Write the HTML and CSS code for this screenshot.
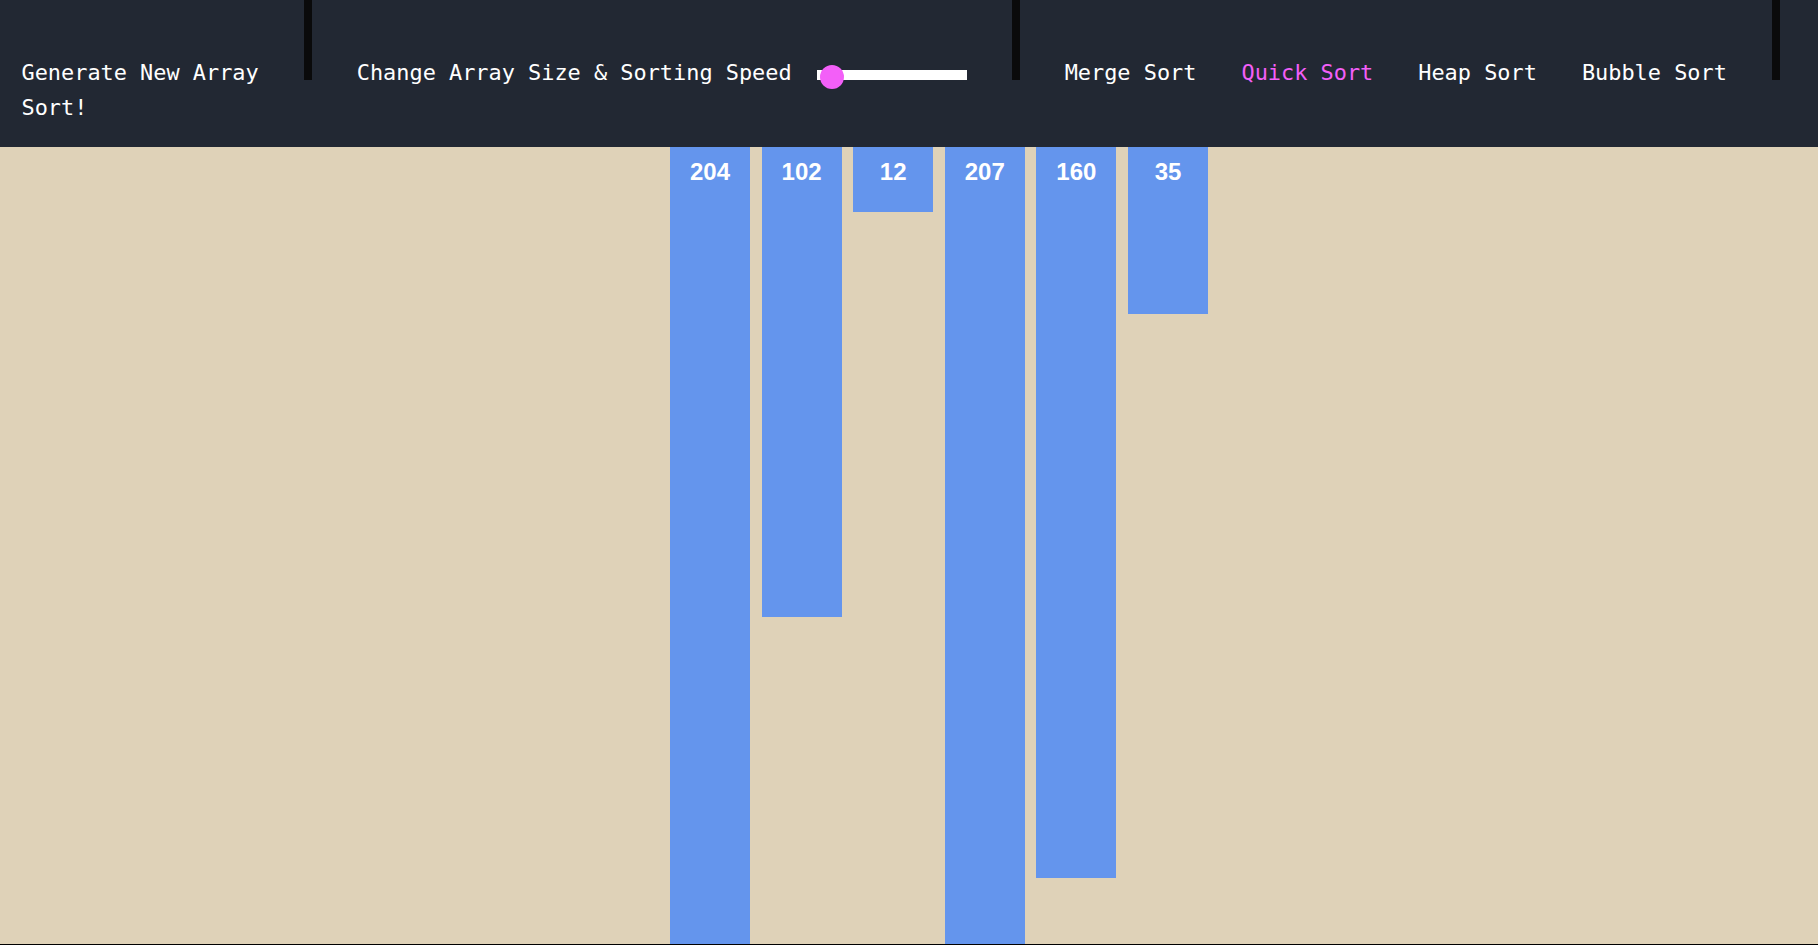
FILE: index.html
```html
<!DOCTYPE html>
<html lang="en">
<head>
<meta charset="utf-8">
<title>Sorting Visualizer</title>
<link rel="stylesheet" href="styles.css">
</head>
<body>
<header class="nav">
  <div class="nav-row">
    <button class="nav-btn">Generate New Array</button>
    <div class="sep"></div>
    <div class="speed">
      <span class="nav-label">Change Array Size &amp; Sorting Speed</span>
      <div class="slider"><span class="thumb"></span></div>
    </div>
    <div class="sep"></div>
    <button class="nav-btn">Merge Sort</button>
    <button class="nav-btn active">Quick Sort</button>
    <button class="nav-btn">Heap Sort</button>
    <button class="nav-btn">Bubble Sort</button>
    <div class="sep"></div>
  </div>
  <div class="nav-row second">
    <button class="nav-btn">Sort!</button>
  </div>
</header>
<main class="stage">
  <div class="bars">
    <div class="bar" style="height:929px"><span class="val">204</span></div>
    <div class="bar" style="height:470px"><span class="val">102</span></div>
    <div class="bar" style="height:65px"><span class="val">12</span></div>
    <div class="bar" style="height:943px"><span class="val">207</span></div>
    <div class="bar" style="height:731px"><span class="val">160</span></div>
    <div class="bar" style="height:167px"><span class="val">35</span></div>
  </div>
</main>
</body>
</html>
```
FILE: styles.css
```css
* { box-sizing: border-box; }
html, body { margin: 0; padding: 0; }
body {
  background: #dfd2b8;
  overflow: hidden;
  font-family: "DejaVu Sans Mono", "Liberation Mono", monospace;
}
.nav {
  background: #222833;
  height: 147px;
  padding-left: 21.5px;
  color: #ffffff;
  font-size: 21.9px;
  line-height: 26px;
}
.nav-row {
  display: flex;
  align-items: baseline;
  gap: 45px;
}
.nav-row.second { margin-top: 9px; }
.nav-btn {
  background: none;
  border: 0;
  padding: 0;
  margin: 0;
  color: #ffffff;
  font: inherit;
  line-height: 26px;
  cursor: pointer;
}
.nav-btn.active { color: #f35ff8; }
.sep {
  width: 8px;
  height: 80px;
  background: #0a0a0b;
}
.speed {
  display: flex;
  align-items: baseline;
  gap: 25px;
}
.slider {
  position: relative;
  width: 150px;
  height: 10px;
  background: #ffffff;
}
.thumb {
  position: absolute;
  left: 3px;
  top: -5px;
  width: 24px;
  height: 24px;
  border-radius: 50%;
  background: #f35ff8;
}
.stage {
  height: 798px;
  overflow: hidden;
  border-bottom: 1px solid #000000;
}
.bars {
  display: flex;
  justify-content: center;
  align-items: flex-start;
  gap: 11.6px;
  padding-left: 60px;
}
.bar {
  width: 80px;
  flex: 0 0 80px;
  background: #6495ed;
  display: flex;
  justify-content: center;
  padding-top: 11px;
}
.val {
  color: #ffffff;
  font-family: "Liberation Sans", Arial, sans-serif;
  font-weight: bold;
  font-size: 24px;
  line-height: 28px;
}
```
